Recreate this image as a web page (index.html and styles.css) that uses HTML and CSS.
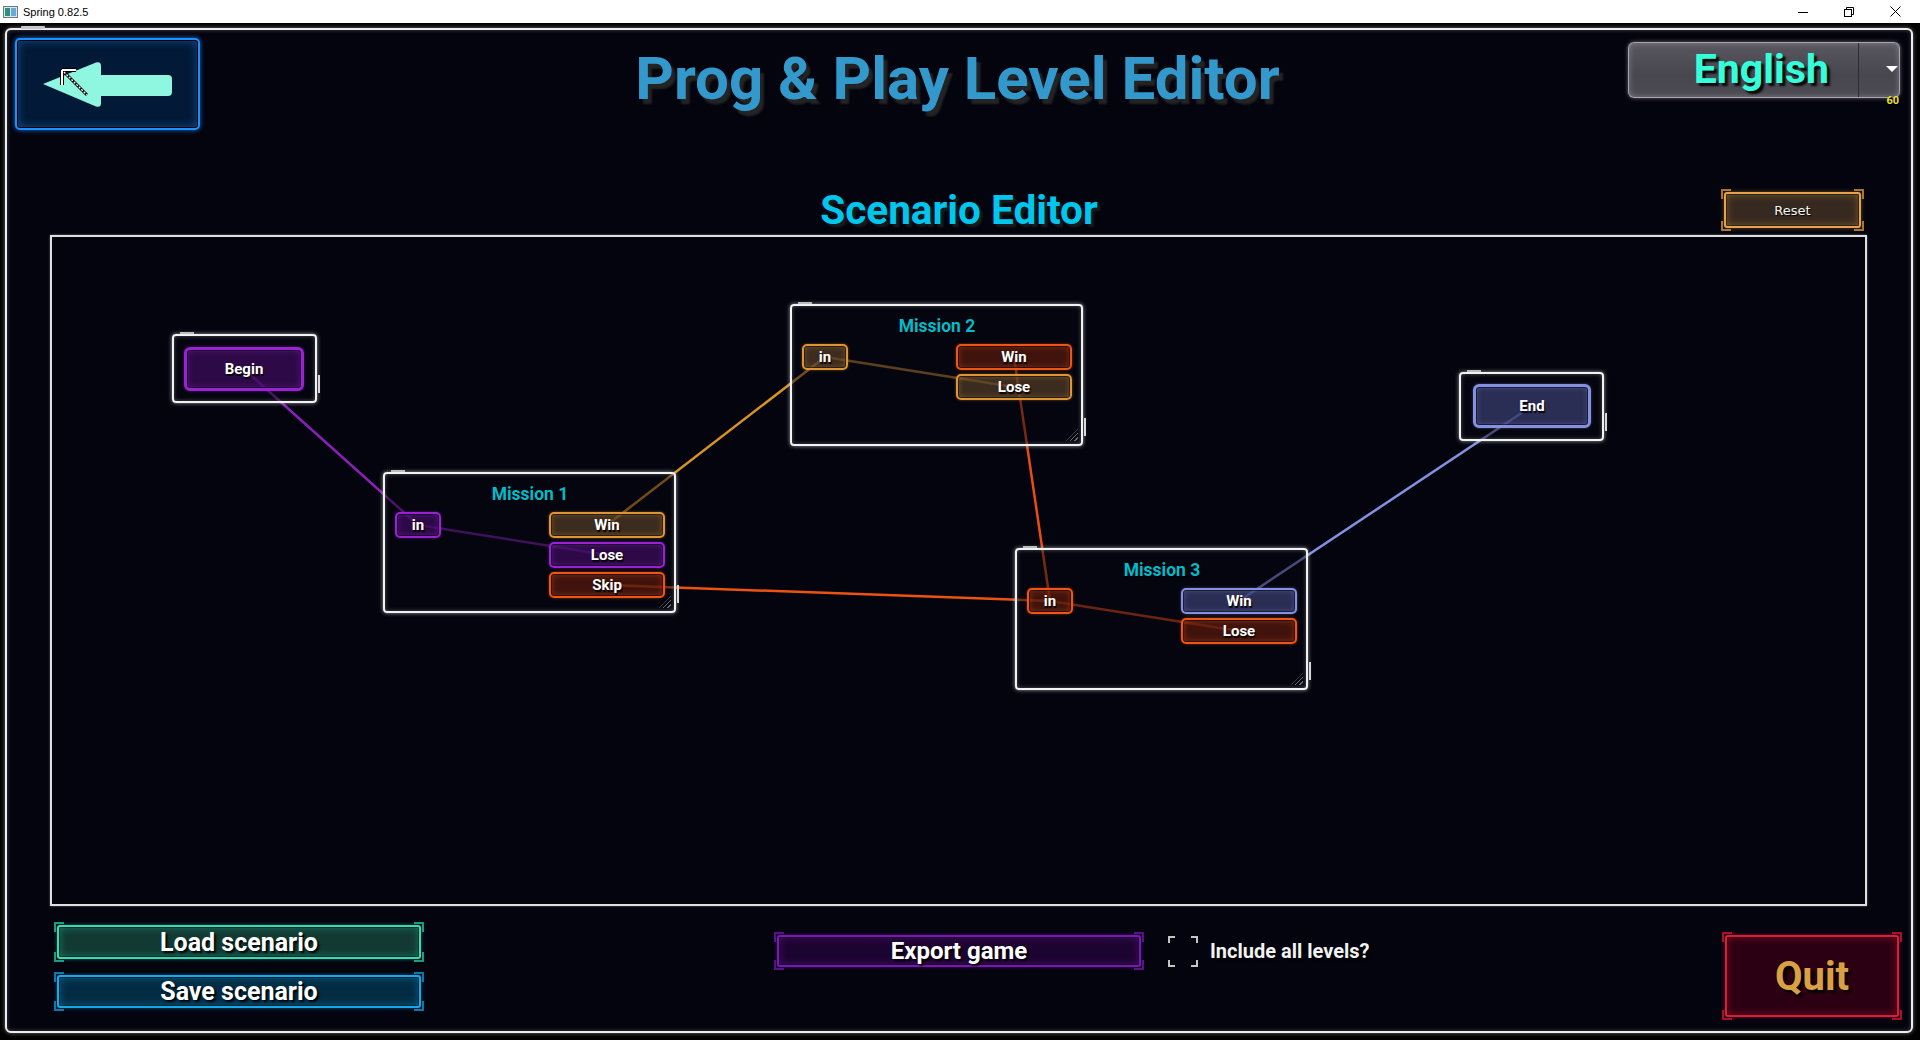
FILE: index.html
```html
<!DOCTYPE html>
<html>
<head>
<meta charset="utf-8">
<title>Spring 0.82.5</title>
<link rel="stylesheet" href="styles.css">
</head>
<body>
<div class="titlebar">
  <div class="tb-left">
    <svg class="appicon" width="15" height="12" viewBox="0 0 15 12"><rect x="0.5" y="0.5" width="14" height="11" fill="#dfe6ea" stroke="#6d7b84"/><rect x="2" y="2" width="5" height="8" fill="#2f8f7a"/><rect x="8" y="2" width="5" height="8" fill="#6aa8d8"/></svg>
    <span>Spring 0.82.5</span>
  </div>
  <div class="tb-ctrls">
    <div class="ctl"><svg width="10" height="10" viewBox="0 0 10 10"><line x1="0" y1="5.5" x2="10" y2="5.5" stroke="#000" stroke-width="1"/></svg></div>
    <div class="ctl"><svg width="10" height="10" viewBox="0 0 10 10"><rect x="0.5" y="2.5" width="7" height="7" fill="none" stroke="#000"/><path d="M2.5 2.5 V0.5 H9.5 V7.5 H7.5" fill="none" stroke="#000"/></svg></div>
    <div class="ctl"><svg width="11" height="11" viewBox="0 0 11 11"><path d="M0.5 0.5 L10.5 10.5 M10.5 0.5 L0.5 10.5" stroke="#000" stroke-width="1"/></svg></div>
  </div>
</div>
<div class="window">
  <div class="frame">
    <header class="top">
      <div class="back">
        <svg class="arrow" width="181" height="88" viewBox="0 0 181 88">
          <path d="M26 44 L79 22.5 Q84 21 84 26 L84 35 L151 35 Q155 35 155 39 L155 52 Q155 56 151 56 L84 56 L84 63 Q84 68 79 66.5 Z" fill="#8ff6df"/>
        </svg>
        <svg class="cursor" width="30" height="30" viewBox="0 0 30 30">
          <path d="M2 2 L2 17 M2 2 L16 2" stroke="#000" stroke-width="4"/>
          <path d="M2 2 L2 17 M2 2 L16 2" stroke="#fff" stroke-width="2"/>
          <path d="M4 4 L27 27" stroke="#000" stroke-width="3"/>
          <path d="M4 4 L27 27" stroke="#fff" stroke-width="1.4" stroke-dasharray="2 1.5"/>
        </svg>
      </div>
      <h1>Prog &amp; Play Level Editor</h1>
      <div class="lang">
        <div class="lang-main">English</div>
        <div class="lang-arrow"><svg width="12" height="6" viewBox="0 0 12 6"><path d="M0 0 L12 0 L6 6 Z" fill="#fff"/></svg></div>
        <span class="fps">60</span>
      </div>
    </header>

    <div class="subhead">
      <div></div>
      <h2>Scenario Editor</h2>
      <div class="reset-cell"><div class="fbtn gold reset">Reset</div></div>
    </div>

    <div class="canvas">
      <svg class="links" width="1813" height="667" viewBox="0 0 1813 667">
        <line x1="192" y1="132" x2="366" y2="288" stroke="#8a20b8"/>
        <line x1="555" y1="318" x2="366" y2="288" stroke="#7a1ca6"/>
        <line x1="555" y1="288" x2="773" y2="120" stroke="#d99225"/>
        <line x1="962" y1="150" x2="773" y2="120" stroke="#b27a2a"/>
        <line x1="555" y1="348" x2="998" y2="364" stroke="#ee5212"/>
        <line x1="962" y1="120" x2="998" y2="364" stroke="#e84c12"/>
        <line x1="1187" y1="394" x2="998" y2="364" stroke="#cc4514"/>
        <line x1="1187" y1="364" x2="1480" y2="169" stroke="#8591e0"/>
      </svg>

      <div class="node small n-begin">
        <div class="port big pu">Begin</div>
      </div>

      <div class="node mission n-m1">
        <div class="mtitle">Mission 1</div>
        <div class="ports">
          <div class="port pu in">in</div>
          <div class="outs">
            <div class="port go">Win</div>
            <div class="port pu">Lose</div>
            <div class="port or">Skip</div>
          </div>
        </div>
        <span class="grip"></span>
      </div>

      <div class="node mission n-m2">
        <div class="mtitle">Mission 2</div>
        <div class="ports">
          <div class="port go in">in</div>
          <div class="outs">
            <div class="port or">Win</div>
            <div class="port go">Lose</div>
          </div>
        </div>
        <span class="grip"></span>
      </div>

      <div class="node mission n-m3">
        <div class="mtitle">Mission 3</div>
        <div class="ports">
          <div class="port or in">in</div>
          <div class="outs">
            <div class="port la">Win</div>
            <div class="port or">Lose</div>
          </div>
        </div>
        <span class="grip"></span>
      </div>

      <div class="node small n-end">
        <div class="port big la">End</div>
      </div>
    </div>

    <footer class="bottom">
      <div class="stack">
        <div class="fbtn teal load">Load scenario</div>
        <div class="fbtn blue save">Save scenario</div>
      </div>
      <div class="export-row">
        <div class="fbtn purple export">Export game</div>
        <div class="checkbox"></div>
        <span class="cb-label">Include all levels?</span>
      </div>
      <div class="fbtn red quit">Quit</div>
    </footer>
  </div>
</div>
</body>
</html>
```

FILE: styles.css
```css
html, body {
  margin: 0;
  padding: 0;
}
body {
  width: 1920px;
  height: 1040px;
  overflow: hidden;
  background: #000;
  font-family: Roboto, "Noto Sans", sans-serif;
}

/* ---------- OS title bar ---------- */
.titlebar {
  height: 23px;
  background: #fff;
  display: flex;
  justify-content: space-between;
  align-items: center;
}
.tb-left {
  display: flex;
  align-items: center;
  gap: 5px;
  padding-left: 3px;
  font: 11px "Liberation Sans", Arial, sans-serif;
  color: #000;
}
.appicon { display: block; }
.tb-ctrls {
  display: flex;
  margin-right: 2px;
  height: 23px;
}
.ctl {
  width: 46px;
  height: 23px;
  display: flex;
  align-items: center;
  justify-content: center;
}
.ctl svg { display: block; }

/* ---------- game window ---------- */
.window {
  height: 1017px;
  background: #000;
  overflow: hidden;
}
.frame {
  position: relative;
  box-sizing: border-box;
  margin: 5px 0 0 5px;
  width: 1908px;
  height: 1005px;
  border: 2px solid #ececec;
  border-radius: 6px;
  background: #04040f;
  box-shadow: 0 0 4px rgba(255,255,255,.45), inset 0 0 4px rgba(255,255,255,.25);
  display: flex;
  flex-direction: column;
}
.frame::before {
  content: "";
  position: absolute;
  top: -4px;
  left: 14px;
  width: 24px;
  height: 3px;
  background: #c8c8c8;
  border-radius: 1px;
}

/* ---------- header ---------- */
.top {
  box-sizing: border-box;
  height: 100px;
  padding: 8px 11px 0 8px;
  display: grid;
  grid-template-columns: 1fr auto 1fr;
  align-items: start;
}
.back {
  position: relative;
  box-sizing: border-box;
  width: 185px;
  height: 92px;
  border: 2px solid #1b8fff;
  border-radius: 5px;
  background: #021a37;
  box-shadow: inset 0 0 0 1px #000, inset 0 0 10px rgba(30,140,255,.55), 0 0 5px rgba(30,140,255,.8);
}
.back .arrow { display: block; }
.back .cursor {
  position: absolute;
  left: 43px;
  top: 28px;
}
h1 {
  margin: 11px 0 0;
  font-family: Roboto, sans-serif;
  font-weight: 700;
  font-size: 60px;
  line-height: 60px;
  color: #3399cc;
  text-shadow: 4px 5px 2px rgba(38,38,38,.95);
  white-space: nowrap;
}
.lang {
  position: relative;
  justify-self: end;
  margin-top: 4px;
  box-sizing: border-box;
  width: 272px;
  height: 56px;
  display: flex;
  border-radius: 6px;
  border: 1px solid rgba(205,198,215,.7);
  background: linear-gradient(#58565e, #48464e 60%, #4c4a52);
  box-shadow: 0 0 4px rgba(200,195,210,.5), inset 0 0 6px rgba(220,215,230,.35);
}
.lang-main {
  flex: 1;
  border-right: 1px solid #2c2b30;
  text-align: right;
  padding-right: 29px;
  font-weight: 700;
  font-size: 41px;
  line-height: 52px;
  color: #33ffda;
  text-shadow: 3px 3px 2px rgba(0,0,0,.9);
}
.lang-arrow {
  width: 39px;
  display: flex;
  align-items: center;
  justify-content: flex-end;
  padding-right: 1px;
}
.lang-arrow svg { display: block; margin-top: -2px; }
.fps {
  position: absolute;
  right: 0;
  bottom: -9px;
  font: 700 11px/11px Roboto, sans-serif;
  color: #e8e030;
  text-shadow: 1px 1px 0 #000;
}

/* ---------- sub header ---------- */
.subhead {
  box-sizing: border-box;
  height: 105px;
  padding: 0 47px 5px;
  display: grid;
  grid-template-columns: 1fr auto 1fr;
  align-items: end;
}
h2 {
  margin: 0;
  font-weight: 700;
  font-size: 40.5px;
  line-height: 40px;
  color: #00c6ee;
  text-shadow: 3px 3px 2px rgba(30,30,30,.9);
}
.reset-cell {
  display: flex;
  justify-content: flex-end;
}

/* ---------- fancy buttons ---------- */
.fbtn {
  position: relative;
  z-index: 0;
  box-sizing: border-box;
  color: #fff;
  font-family: Roboto, sans-serif;
  font-weight: 700;
  text-shadow: 2px 2px 2px rgba(0,0,0,.9);
  display: flex;
  align-items: center;
  justify-content: center;
  white-space: nowrap;
  background:
    linear-gradient(var(--k), var(--k)) 0 0 / 10px 2px,
    linear-gradient(var(--k), var(--k)) 0 0 / 2px 10px,
    linear-gradient(var(--k), var(--k)) 100% 0 / 10px 2px,
    linear-gradient(var(--k), var(--k)) 100% 0 / 2px 10px,
    linear-gradient(var(--k), var(--k)) 0 100% / 10px 2px,
    linear-gradient(var(--k), var(--k)) 0 100% / 2px 10px,
    linear-gradient(var(--k), var(--k)) 100% 100% / 10px 2px,
    linear-gradient(var(--k), var(--k)) 100% 100% / 2px 10px;
  background-repeat: no-repeat;
}
.fbtn::after {
  content: "";
  position: absolute;
  inset: 3px;
  z-index: -1;
  border: 2px solid var(--c);
  border-radius: 3px;
  background: var(--bg);
  box-shadow: inset 0 0 0 1px rgba(0,0,0,.45), inset 0 0 9px var(--g), 0 0 4px var(--g);
}
.gold   { --c: #e4a24a; --k: #a8742c; --bg: #36291f; --g: rgba(230,160,70,.45); }
.teal   { --c: #34dcb4; --k: #1c9a7e; --bg: #123a33; --g: rgba(52,220,180,.4); }
.blue   { --c: #12aaea; --k: #0b78a8; --bg: #032c44; --g: rgba(20,170,235,.45); }
.purple { --c: #7c16b4; --k: #5a1086; --bg: #1c0430; --g: rgba(130,25,190,.45); }
.red    { --c: #e8163e; --k: #a80f2c; --bg: #2c0012; --g: rgba(230,20,60,.45); }

.reset {
  width: 143px;
  height: 42px;
  margin-bottom: -1px;
  font: 400 13px "DejaVu Sans", sans-serif;
  text-shadow: 1px 1px 1px #000;
  color: #f4f4f4;
}

/* ---------- canvas ---------- */
.canvas {
  position: relative;
  box-sizing: border-box;
  margin: 0 44px 0 43px;
  height: 671px;
  border: 2px solid #dedede;
  box-shadow: 0 0 2px rgba(255,255,255,.4);
}
.links {
  position: absolute;
  left: 0;
  top: 0;
  stroke-width: 2.5;
  stroke-linecap: round;
}
.node {
  position: absolute;
  box-sizing: border-box;
  border: 2px solid #f2f2f2;
  border-radius: 4px;
  background: rgba(5,5,16,.5);
  box-shadow: 0 0 4px rgba(255,255,255,.6), inset 0 0 4px rgba(255,255,255,.3);
}
.node::before {
  content: "";
  position: absolute;
  top: -4px;
  left: 6px;
  width: 14px;
  height: 2px;
  background: #bdbdbd;
}
.node::after {
  content: "";
  position: absolute;
  right: -5px;
  bottom: 8px;
  width: 2px;
  height: 18px;
  background: #d8d8d8;
}
.small {
  width: 145px;
  height: 69px;
}
.n-begin { left: 120px; top: 97px; padding: 11px 10px 10px 10px; }
.n-end   { left: 1407px; top: 135px; padding: 10px 11px 11px 12px; }

.mission {
  width: 293px;
  height: 142px;
  padding: 10px 9px 0 10px;
}
.n-m1 { left: 331px; top: 235px; height: 141px; }
.n-m2 { left: 738px; top: 67px; }
.n-m3 { left: 963px; top: 311px; }

.mtitle {
  text-align: center;
  font-weight: 700;
  font-size: 17.5px;
  line-height: 20px;
  color: #00bccb;
  text-shadow: 1px 1px 1px #000;
}
.ports {
  margin-top: 8px;
  display: flex;
  justify-content: space-between;
  align-items: flex-start;
}
.outs {
  width: 116px;
  display: flex;
  flex-direction: column;
  gap: 4px;
}
.port {
  box-sizing: border-box;
  height: 26px;
  border: 2px solid var(--c);
  border-radius: 5px;
  background: var(--bg);
  box-shadow: inset 0 0 0 1px rgba(0,0,0,.55), inset 0 0 6px var(--g), 0 0 3px var(--g);
  color: #fff;
  font-weight: 700;
  font-size: 15px;
  line-height: 22px;
  text-align: center;
  text-shadow: 1px 2px 1px rgba(0,0,0,.95);
}
.port.in { width: 46px; }
.port.big {
  width: 120px;
  height: 44px;
  border-width: 3px;
  border-radius: 6px;
  line-height: 38px;
}
.n-end .port.big { width: 118px; }
.pu { --c: #9a22d2; --bg: rgba(72,14,108,.6);  --g: rgba(150,40,210,.5); }
.go { --c: #de9632; --bg: rgba(96,70,42,.6);   --g: rgba(225,150,50,.45); }
.or { --c: #ee5616; --bg: rgba(104,30,12,.6);  --g: rgba(240,85,20,.5); }
.la { --c: #8591e0; --bg: rgba(66,72,130,.6);  --g: rgba(135,145,225,.45); }

.grip {
  position: absolute;
  right: 3px;
  bottom: 3px;
  width: 12px;
  height: 12px;
  background: repeating-linear-gradient(-45deg, transparent 0 2px, #6a6a6a 2px 3px);
  clip-path: polygon(100% 0, 100% 100%, 0 100%);
}

/* ---------- bottom bar ---------- */
.bottom {
  flex: 1;
  display: flex;
  align-items: flex-start;
  padding-top: 16px;
}
.stack {
  margin-left: 47px;
  width: 370px;
  display: flex;
  flex-direction: column;
  gap: 10px;
}
.load { height: 40px; font-size: 25px; }
.save { height: 39px; font-size: 25px; }
.export-row {
  margin-left: 350px;
  margin-top: 10px;
  display: flex;
  align-items: center;
}
.export {
  width: 370px;
  height: 38px;
  font-size: 24px;
}
.checkbox {
  position: relative;
  margin-left: 24px;
  width: 30px;
  height: 31px;
  --k: #c4c4c4;
  background:
    linear-gradient(var(--k), var(--k)) 0 0 / 7px 2px,
    linear-gradient(var(--k), var(--k)) 0 0 / 2px 7px,
    linear-gradient(var(--k), var(--k)) 100% 0 / 7px 2px,
    linear-gradient(var(--k), var(--k)) 100% 0 / 2px 7px,
    linear-gradient(var(--k), var(--k)) 0 100% / 7px 2px,
    linear-gradient(var(--k), var(--k)) 0 100% / 2px 7px,
    linear-gradient(var(--k), var(--k)) 100% 100% / 7px 2px,
    linear-gradient(var(--k), var(--k)) 100% 100% / 2px 7px;
  background-repeat: no-repeat;
}
.cb-label {
  margin-left: 12px;
  font-weight: 700;
  font-size: 20px;
  color: #f2f2f2;
  text-shadow: 2px 2px 2px rgba(0,0,0,.9);
  white-space: nowrap;
}
.quit {
  margin-left: auto;
  margin-right: 9px;
  margin-top: 10px;
  width: 180px;
  height: 88px;
  font-size: 40px;
  color: #d9a142;
  text-shadow: 3px 3px 2px rgba(0,0,0,.95);
}
```
